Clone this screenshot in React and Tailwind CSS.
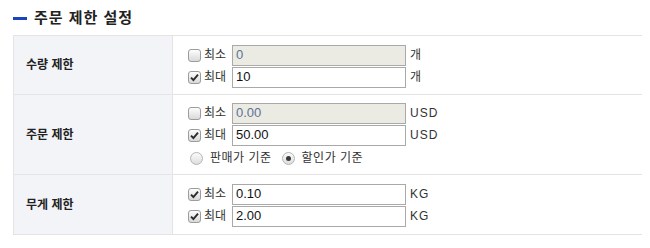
import React from "react";

const font = { fontFamily: '"Liberation Sans", "Noto Sans CJK KR", sans-serif' };

const Check = ({ checked }) => (
  <span className="flex h-[13px] w-[13px] shrink-0 items-center justify-center rounded-[3px] border border-[#9c9c9c] bg-gradient-to-b from-[#fdfdfd] to-[#d9d9d9]">
    {checked && (
      <svg width="9" height="9" viewBox="0 0 9 9">
        <path d="M1 4.6 L3.4 7 L8 1.6" fill="none" stroke="#2b2b2b" strokeWidth="1.9" />
      </svg>
    )}
  </span>
);

const Radio = ({ checked }) => (
  <span className="flex h-[13px] w-[13px] shrink-0 items-center justify-center rounded-full border border-[#b4b4b4] bg-gradient-to-b from-[#fbfbfb] to-[#dedede]">
    {checked && <span className="h-[5px] w-[5px] rounded-full bg-[#3a3a3a]" />}
  </span>
);

const Field = ({ checked, label, value, unit, disabled }) => (
  <div className="flex h-[20px] items-center">
    <span className="ml-[15px]">
      <Check checked={checked} />
    </span>
    <span className="ml-[3px] w-[28px] text-[12px] text-[#333]">{label}</span>
    <div
      className={
        "flex h-[21px] w-[174px] items-center border border-[#a9a9a9] pl-[3px] text-[13px] " +
        (disabled ? "bg-[#ebebe4] text-[#5b7394]" : "bg-white text-[#111]")
      }
    >
      {value}
    </div>
    <span className="ml-[4px] text-[12px] tracking-[1px] text-[#333]">{unit}</span>
  </div>
);

const Row = ({ label, children, className }) => (
  <div className="grid grid-cols-[160px_1fr] border-b border-[#e4e4e4]">
    <div className="flex items-center border-l border-r border-[#e4e4e4] bg-[#f3f4f8] pl-[12px] text-[12px] font-bold text-[#222]">
      {label}
    </div>
    <div className={"flex flex-col gap-[2px] " + className}>{children}</div>
  </div>
);

export default function App() {
  return (
    <div className="h-[248px] w-[650px] bg-white px-[13px] pt-[8px]" style={font}>
      <div className="flex h-[20px] items-center">
        <span className="h-[3px] w-[14px] bg-[#1b44c0]" />
        <h2 className="ml-[7px] text-[15px] font-bold tracking-[1px] text-[#222]">주문 제한 설정</h2>
      </div>
      <div className="mt-[7px] w-[629px] border-t border-[#e4e4e4]">
        <Row label="수량 제한" className="pt-[9px] pb-[7px]">
          <Field label="최소" value="0" unit="개" disabled />
          <Field checked label="최대" value="10" unit="개" />
        </Row>
        <Row label="주문 제한" className="pt-[8px] pb-[5px]">
          <Field label="최소" value="0.00" unit="USD" disabled />
          <Field checked label="최대" value="50.00" unit="USD" />
          <div className="flex h-[22px] items-center text-[12px] text-[#333]">
            <span className="ml-[17px]">
              <Radio />
            </span>
            <span className="ml-[7px] tracking-[0.5px]">판매가 기준</span>
            <span className="ml-[10px]">
              <Radio checked />
            </span>
            <span className="ml-[7px] tracking-[0.5px]">할인가 기준</span>
          </div>
        </Row>
        <Row label="무게 제한" className="pt-[9px] pb-[8px]">
          <Field checked label="최소" value="0.10" unit="KG" />
          <Field checked label="최대" value="2.00" unit="KG" />
        </Row>
      </div>
    </div>
  );
}
